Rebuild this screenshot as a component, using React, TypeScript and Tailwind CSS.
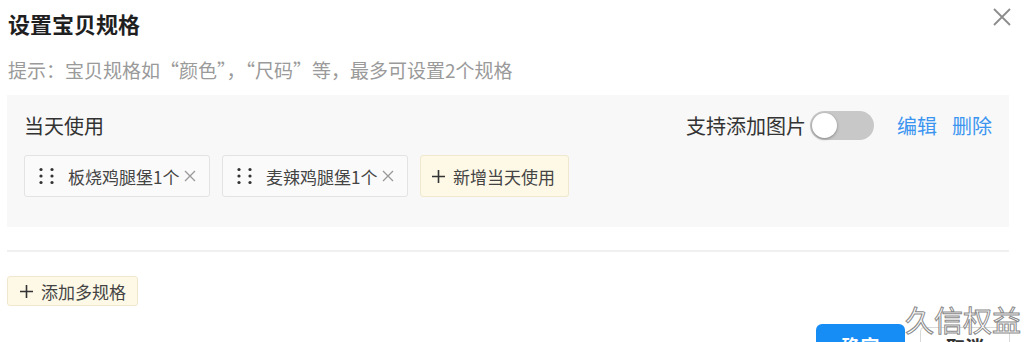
import React from "react";

const Dots = () => (
  <svg width="17" height="20" viewBox="0 0 17 20" className="shrink-0">
    {[3.5, 10, 16.5].map((y) => (
      <React.Fragment key={y}>
        <circle cx="3" cy={y} r="1.6" fill="#333" />
        <circle cx="14" cy={y} r="1.6" fill="#333" />
      </React.Fragment>
    ))}
  </svg>
);

const SmallX = () => (
  <svg width="12" height="12" viewBox="0 0 12 12" className="shrink-0">
    <path d="M1 1L11 11M11 1L1 11" stroke="#999" strokeWidth="1.3" />
  </svg>
);

const Plus = () => (
  <svg width="13" height="13" viewBox="0 0 13 13" className="shrink-0">
    <path d="M6.5 0V13M0 6.5H13" stroke="#333" strokeWidth="1.6" />
  </svg>
);

const Tag = ({ label }: { label: string }) => (
  <div className="flex h-[42px] w-[186px] items-center rounded-[3px] border border-[#e3e3e3] bg-[#fafafa] pl-[13px] pr-[10px]">
    <Dots />
    <span className="ml-[13px] text-[17px] text-[#444] leading-none">{label}</span>
    <span className="ml-[5px]">
      <SmallX />
    </span>
  </div>
);

export default function App() {
  return (
    <div
      className="relative h-[342px] w-[1024px] overflow-hidden bg-white"
      style={{ fontFamily: '"Noto Sans CJK SC", "Noto Sans", sans-serif' }}
    >
      <div className="flex items-start justify-between pl-[8px] pr-[12px] pt-[7px]">
        <div className="text-[22px] font-bold leading-[32px] text-[#1f1f1f]">设置宝贝规格</div>
        <svg width="20" height="20" viewBox="0 0 20 20" className="mt-[0px]">
          <path d="M2 2L18 18M18 2L2 18" stroke="#8c8c8c" strokeWidth="1.8" />
        </svg>
      </div>
      <div className="mt-[18px] pl-[8px] text-[19px] leading-[26px] text-[#9a9a9a]">
        提示：宝贝规格如“颜色”，“尺码”等，最多可设置2个规格
      </div>
      <div className="ml-[7px] mt-[12px] h-[132px] w-[1002px] bg-[#f8f8f8] px-[17px] pt-[16px]">
        <div className="flex h-[29px] items-center justify-between">
          <span className="text-[20px] text-[#333] leading-none">当天使用</span>
          <div className="flex items-center">
            <span className="text-[20px] text-[#333] leading-none">支持添加图片</span>
            <div className="ml-[4px] flex h-[29px] w-[64px] items-center rounded-full bg-[#c8c8c8] pl-[2px]">
              <div className="h-[25px] w-[25px] rounded-full bg-white shadow-[0_1px_3px_rgba(0,0,0,0.35)]" />
            </div>
            <span className="ml-[23px] text-[20px] text-[#3b95f0] leading-none">编辑</span>
            <span className="ml-[15px] text-[20px] text-[#3b95f0] leading-none">删除</span>
          </div>
        </div>
        <div className="mt-[15px] flex gap-[12px]">
          <Tag label="板烧鸡腿堡1个" />
          <Tag label="麦辣鸡腿堡1个" />
          <div className="flex h-[42px] w-[149px] items-center rounded-[3px] border border-[#efe8cf] bg-[#fdf9e6] pl-[11px]">
            <Plus />
            <span className="ml-[8px] text-[17px] leading-none text-[#444]">新增当天使用</span>
          </div>
        </div>
      </div>
      <div className="ml-[7px] mt-[23px] h-[2px] w-[1002px] bg-[#f0f0f0]" />
      <div className="ml-[7px] mt-[24px] flex h-[30px] w-[131px] items-center rounded-[3px] border border-[#efe8cf] bg-[#fdf9e6] pl-[12px]">
        <Plus />
        <span className="ml-[8px] text-[17px] leading-none text-[#444]">添加多规格</span>
      </div>
      <div className="absolute left-[816px] top-[324px] flex h-[40px] w-[89px] justify-center rounded-[6px] bg-[#168df5] pt-[12px]">
        <span className="text-[19px] font-bold leading-none text-white">确定</span>
      </div>
      <div className="absolute left-[920px] top-[327px] flex h-[40px] w-[90px] justify-center rounded-[4px] border border-[#d8d8d8] bg-white pt-[9px]">
        <span className="text-[19px] font-bold leading-none text-[#333]">取消</span>
      </div>
      <div className="absolute left-[905px] top-[305px] text-[29px] leading-none text-white [-webkit-text-stroke:1px_#8a8a8a]">
        久信权益
      </div>
    </div>
  );
}
